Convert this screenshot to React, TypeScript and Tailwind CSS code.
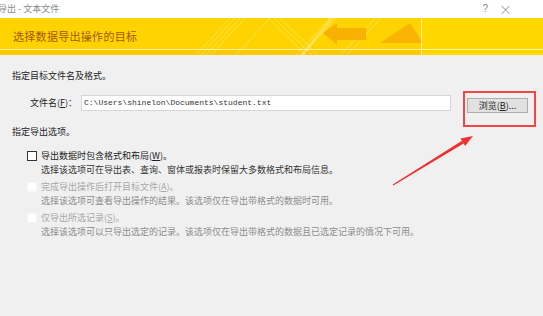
import React from "react"

const cjk = { fontFamily: '"Noto Sans CJK SC", "Noto Sans", sans-serif' }

const Banner = () => (
  <div className="relative h-[37px] bg-[#ffd300] overflow-hidden">
    {/* banner artwork */}
    <svg className="absolute inset-0" width="543" height="37" viewBox="0 0 543 37">
      <rect x="0" y="31" width="543" height="6" fill="#ffca00" />
      <rect x="421" y="0" width="122" height="37" fill="#ffd800" />
      <g stroke="#fff3a8" strokeOpacity="0.45" strokeWidth="1">
        <line x1="196" y1="37" x2="230" y2="0" />
        <line x1="201" y1="37" x2="235" y2="0" />
        <line x1="206" y1="37" x2="240" y2="0" />
        <line x1="211" y1="37" x2="245" y2="0" />
        <line x1="236" y1="37" x2="270" y2="0" />
        <line x1="268" y1="0" x2="306" y2="37" />
        <line x1="274" y1="0" x2="312" y2="37" />
        <line x1="280" y1="0" x2="318" y2="37" />
        <line x1="296" y1="37" x2="330" y2="0" />
        <line x1="302" y1="37" x2="336" y2="0" />
        <line x1="341" y1="37" x2="375" y2="0" />
        <line x1="347" y1="37" x2="381" y2="0" />
      </g>
      <polygon points="323,15 337,5 337,10 366,10 366,22 337,22 337,27" fill="#f4a200" fillOpacity="0.7" />
      <polygon points="380,25 421,25 421,22 410,5" fill="#f5a600" fillOpacity="0.7" />
      <polygon points="300,37 330,0 334,0 304,37" fill="#fff6c0" fillOpacity="0.35" />
      <line x1="0" y1="31.5" x2="543" y2="31.5" stroke="#fff1a6" strokeWidth="1" />
      <line x1="421.5" y1="0" x2="421.5" y2="37" stroke="#fff1a6" strokeWidth="1" />
    </svg>
    <div className="relative h-full flex items-center pl-[13px] pb-[1px]">
      <span className="text-[11px] leading-none tracking-[0.3px] text-[#a45800]" style={cjk}>
        选择数据导出操作的目标
      </span>
    </div>
  </div>
)

const Check = ({ enabled }: { enabled: boolean }) => (
  <div
    className={
      enabled
        ? "w-[10px] h-[10px] border border-[#333] bg-white shrink-0"
        : "w-[10px] h-[10px] border border-[#f6f6f6] bg-white shrink-0"
    }
  />
)

const Option = ({
  title,
  hint,
  enabled,
  className,
}: {
  title: React.ReactNode
  hint: string
  enabled: boolean
  className?: string
}) => (
  <div className={className}>
    <div className="flex items-center gap-[4px] h-[14px]">
      <Check enabled={enabled} />
      <span className={enabled ? "text-[#222]" : "text-[#a8a8a8]"}>{title}</span>
    </div>
    <div className={enabled ? "h-[14px] pl-[14px] leading-[14px] text-[#333]" : "h-[14px] pl-[14px] leading-[14px] text-[#8c8c8c]"}>
      {hint}
    </div>
  </div>
)

export default function App() {
  return (
    <div className="relative w-[543px] h-[316px] overflow-hidden bg-[#f0f0f0] text-[9px] leading-[14px]" style={cjk}>
      {/* title bar */}
      <div className="h-[18px] bg-white flex items-center text-[#8a8a8a]">
        <span className="-ml-[2px] text-[9px]">导出 - 文本文件</span>
        <span className="ml-auto text-[10px]" style={{ fontFamily: '"Liberation Sans", sans-serif' }}>?</span>
        <span className="ml-[11px] mr-[31px] text-[13px] font-light">×</span>
      </div>

      <Banner />

      <div className="pl-[12px]">
        <div className="mt-[14px] h-[14px] text-[#222]">指定目标文件名及格式。</div>

        <div className="mt-[12px] flex h-[16px]">
          <div className="w-[69px] pl-[18px] flex items-center text-[#222]">
            文件名(<span className="underline">F</span>)：
          </div>
          <div className="w-[370px] h-[16px] bg-white border border-[#d6d6d6] flex items-center pl-[2px]">
            <span className="text-[8px] text-[#333]" style={{ fontFamily: '"Liberation Mono", monospace' }}>
              C:\Users\shinelon\Documents\student.txt
            </span>
          </div>
          <div className="ml-[16px] mt-[3px] w-[61px] h-[15px] bg-[#e1e1e1] border border-[#adadad] flex items-center justify-center text-[#222]">
            浏览(<span className="underline">B</span>)...
          </div>
        </div>

        <div className="mt-[14px] h-[14px] text-[#222]">指定导出选项。</div>

        <div className="pl-[15px]">
          <Option
            className="mt-[10px]"
            enabled
            title={<>导出数据时包含格式和布局(<span className="underline">W</span>)。</>}
            hint="选择该选项可在导出表、查询、窗体或报表时保留大多数格式和布局信息。"
          />
          <Option
            className="mt-[3px]"
            enabled={false}
            title={<>完成导出操作后打开目标文件(<span className="underline">A</span>)。</>}
            hint="选择该选项可查看导出操作的结果。该选项仅在导出带格式的数据时可用。"
          />
          <Option
            className="mt-[3px]"
            enabled={false}
            title={<>仅导出所选记录(<span className="underline">S</span>)。</>}
            hint="选择该选项可以只导出选定的记录。该选项仅在导出带格式的数据且已选定记录的情况下可用。"
          />
        </div>
      </div>

      {/* red annotation */}
      <div className="absolute left-[463px] top-[91px] w-[73px] h-[36px] border-2 border-[#f04646]" />
      <svg className="absolute left-0 top-0 pointer-events-none" width="543" height="316">
        <polygon points="393.3,185.4 392.7,184.6 462.0,140.8 463.6,143.4" fill="#ee3030" />
        <polygon points="473,136 460.5,138.5 465.1,146.1" fill="#ee3030" />
      </svg>
    </div>
  )
}
